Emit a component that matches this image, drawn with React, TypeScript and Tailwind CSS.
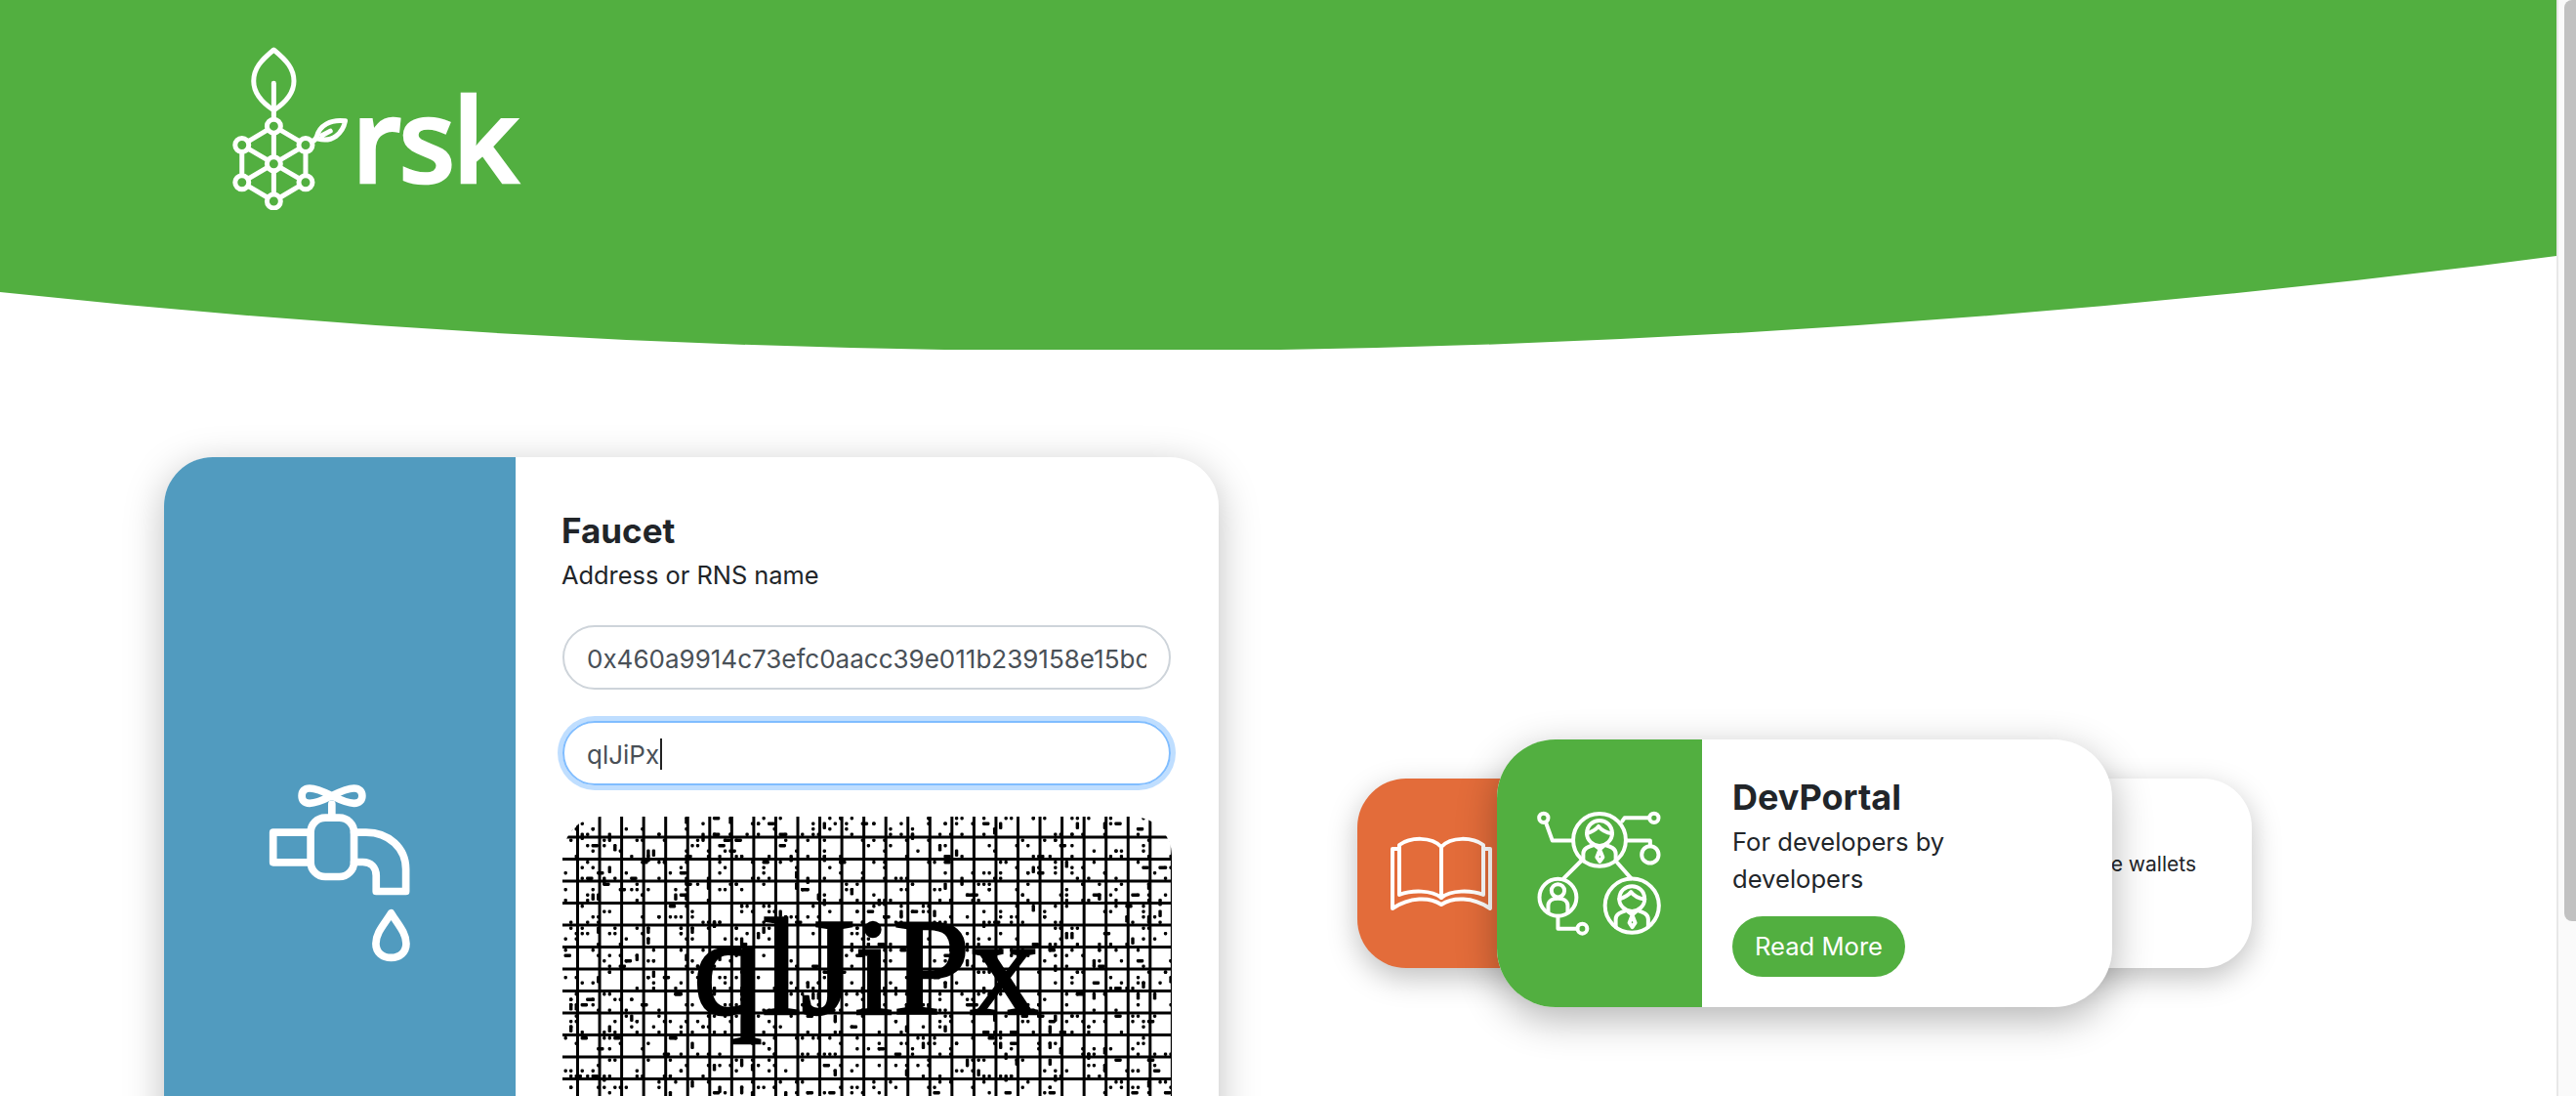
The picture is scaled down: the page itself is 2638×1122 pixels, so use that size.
const GREEN = "#52af40";

function buildNoise() {
  let seed = 12345;
  const rnd = () => {
    seed = (seed * 1103515245 + 12345) & 0x7fffffff;
    return seed / 0x7fffffff;
  };
  const items: { x: number; y: number; w: number; h: number }[] = [];
  for (let c = 0; c < 29; c++) {
    for (let r = 0; r < 16; r++) {
      const n = 1 + Math.floor(rnd() * 6);
      for (let i = 0; i < n; i++) {
        const x = c * 22.55 - 4 + Math.floor(rnd() * 4) * 5.5;
        const y = r * 22.5 + Math.floor(rnd() * 4) * 5.5;
        const t = rnd();
        items.push({ x, y, w: t > 0.92 ? 7.5 : 3.4, h: t < 0.1 ? 7.5 : 3.4 });
      }
    }
  }
  return items;
}
const noise = buildNoise();

function Captcha() {
  const v = Array.from({ length: 28 }, (_, i) => 15.5 + i * 22.55);
  const h = Array.from({ length: 15 }, (_, i) => 21 + i * 22.5);
  return (
    <svg width="624" height="340" viewBox="0 0 624 340" className="block blur-[0.5px]">
      <rect width="624" height="340" fill="#fff" />
      <text x="134" y="202" fontFamily="'Liberation Serif', serif" fontSize="142" fill="#000" stroke="#000" strokeWidth="2.5" textLength="354" lengthAdjust="spacingAndGlyphs">
        qlJiPx
      </text>
      {noise.map((d, i) => (
        <rect key={i} x={d.x} y={d.y} width={d.w} height={d.h} rx="1.3" fill="#000" />
      ))}
      {v.map((x) => (
        <line key={x} x1={x} x2={x} y1="0" y2="340" stroke="#000" strokeWidth="3" />
      ))}
      {h.map((y) => (
        <line key={y} y1={y} y2={y} x1="0" x2="624" stroke="#000" strokeWidth="3" />
      ))}
    </svg>
  );
}

function Logo() {
  const nodes = [
    [240, 327],
    [142, 385],
    [338, 385],
    [240, 443],
    [142, 500],
    [338, 500],
    [240, 558],
  ];
  return (
    <svg width="120" height="168" viewBox="110 80 360 505" fill="none" stroke="#fff" strokeWidth="15" strokeLinecap="round" strokeLinejoin="round">
      <path d="M240 92C200 125 178 150 178 188C178 225 205 255 240 278C275 255 302 225 302 188C302 150 280 125 240 92Z" />
      <path d="M240 195V327" />
      <path d="M240 327L142 385V500L240 558L338 500V385L240 327V558M142 385L338 500M338 385L142 500" />
      <path d="M352 378C360 374 368 372 372 360C380 325 415 305 460 311C452 350 420 378 376 366M388 356L414 342" />
      {nodes.map(([x, y]) => (
        <circle key={x + "-" + y} cx={x} cy={y} r="21" fill={GREEN} />
      ))}
    </svg>
  );
}

function Tap() {
  return (
    <svg width="147" height="182" viewBox="100 70 440 545" fill="none" stroke="#fff" strokeWidth="23" strokeLinejoin="round" strokeLinecap="round">
      <path d="M300 105C270 90 250 82 232 82C215 82 208 92 208 105C208 118 215 128 232 128C250 128 270 120 300 105C330 90 350 82 368 82C385 82 393 92 393 105C393 118 385 128 368 128C350 128 330 120 300 105Z" />
      <path d="M300 130V172" />
      <rect x="235" y="172" width="133" height="181" rx="45" />
      <path d="M235 217H120V309H235" />
      <path d="M368 217H405C475 217 527 265 527 330V398H436V350C436 325 420 308 395 308H368" />
      <path d="M482 465C460 500 435 525 435 558C435 585 455 601 482 601C508 601 528 585 528 558C528 525 503 500 482 465Z" />
    </svg>
  );
}

function Network() {
  return (
    <svg width="130" height="128" viewBox="100 60 390 385" fill="none" stroke="#fff" strokeWidth="12" strokeLinejoin="round" strokeLinecap="round">
      <circle cx="295" cy="150" r="81" />
      <circle cx="395" cy="352" r="83" />
      <circle cx="167" cy="327" r="57" />
      <circle cx="123" cy="82" r="14" />
      <circle cx="463" cy="82" r="14" />
      <circle cx="451" cy="195" r="26" />
      <circle cx="242" cy="423" r="15" />
      <path d="M130 97L150 152H213M365 92L372 82H449M376 152H451V169M238 215L185 268M350 220L392 268M167 384V423H227" />
      <path d="M256 130C256 105 275 90 295 90C315 90 334 105 334 130C334 150 315 168 295 168C275 168 256 150 256 130Z" />
      <path d="M256 130C270 125 282 120 292 108C302 122 318 128 334 130" />
      <path d="M245 215V192C245 175 262 170 278 165M345 215V192C345 175 328 170 312 165M283 168H308L296 178ZM296 180L287 203L296 216L305 203Z" />
      <path d="M356 332C356 307 375 292 395 292C415 292 434 307 434 332C434 352 415 370 395 370C375 370 356 352 356 332Z" />
      <path d="M356 332C370 327 382 322 392 310C402 324 418 330 434 332" />
      <path d="M345 418V394C345 377 362 372 378 367M445 418V394C445 377 428 372 412 367M383 370H408L396 380ZM396 382L387 405L396 418L405 405Z" />
      <circle cx="167" cy="306" r="20" />
      <path d="M137 372V352C137 335 155 330 167 330C179 330 197 335 197 352V372" />
    </svg>
  );
}

function Book() {
  return (
    <svg width="104" height="76" viewBox="0 0 104 76" fill="none" stroke="#fff" strokeWidth="4" strokeLinejoin="round" strokeLinecap="round">
      <path d="M9 9C20 1 42 0 52 11V63C42 55 22 55 9 60Z" />
      <path d="M52 11C62 0 84 1 95 9V60C82 55 62 55 52 63" />
      <path d="M9 13H2V74C20 62 40 62 52 70C64 62 84 62 102 74V13H95" />
    </svg>
  );
}

export default function App() {
  return (
    <div className="flex h-[1122px] w-full overflow-hidden bg-white font-['Inter',sans-serif] text-[#212529]">
      <main className="relative min-w-0 flex-1">
        <header className="relative h-[358px]">
          <svg className="absolute inset-0" width="2618" height="358" viewBox="0 0 2618 358">
            <path d="M0 0H2618V262Q1280 436 0 299Z" fill={GREEN} />
          </svg>
          <div className="relative flex items-start pl-[237px] pt-[47px]">
            <Logo />
            <span className="ml-[3px] mt-[24px] font-['Open_Sans',sans-serif] text-[119px] font-semibold leading-[140px] tracking-[-3px] text-white [-webkit-text-stroke:2.5px_white]">rsk</span>
          </div>
        </header>

        <section className="flex items-start pl-[168px] pt-[110px]">
          <article className="flex h-[852px] w-[1080px] shrink-0 overflow-hidden rounded-[50px] bg-white shadow-[0_10px_40px_rgba(0,0,0,0.25)]">
            <div className="flex w-[360px] shrink-0 items-center justify-center bg-[#519bbf] pr-[3px]">
              <Tap />
            </div>
            <div className="flex flex-col px-[48px] pt-[52px]">
              <h2 className="ml-[-1px] text-[35px] font-bold leading-[46px]">Faucet</h2>
              <p className="ml-[-1px] mt-[1px] text-[25.4px] leading-[44px]">Address or RNS name</p>
              <div className="mt-[29px] flex h-[66px] w-[623px] items-center overflow-hidden whitespace-nowrap rounded-full border-2 border-[#ced4da] px-[23px] pt-[2px] text-[26px] text-[#495057]">
                <span className="block w-full overflow-hidden">0x460a9914c73efc0aacc39e011b239158e15bcd4f</span>
              </div>
              <div className="mt-[32px] flex h-[66px] w-[623px] items-center rounded-full border-2 border-[#80bdff] px-[23px] pt-[2px] text-[26px] text-[#495057] shadow-[0_0_0_5px_rgba(0,123,255,0.25)]">
                <span>qlJiPx</span>
                <span className="ml-px h-[32px] w-[2px] bg-[#222]" />
              </div>
              <div className="mt-[32px] w-[624px] overflow-hidden rounded-[40px]">
                <Captcha />
              </div>
            </div>
          </article>

          <div className="relative ml-[285px] mt-[289px] w-[630px]">
            <div className="absolute left-[-143px] top-[40px] flex h-[194px] w-[300px] items-center rounded-[50px] bg-[#e36c3a] pl-[34px] shadow-[0_10px_30px_rgba(0,0,0,0.25)]">
              <Book />
            </div>
            <div className="absolute right-[-143px] top-[40px] flex h-[194px] w-[300px] items-center justify-end rounded-[50px] bg-white pb-[18px] pr-[57px] text-[21px] shadow-[0_10px_30px_rgba(0,0,0,0.25)]">
              <span>e wallets</span>
            </div>
            <div className="relative flex h-[274px] overflow-hidden rounded-[60px] bg-white shadow-[0_12px_40px_rgba(0,0,0,0.3)]">
              <div className="flex w-[210px] shrink-0 items-center justify-center bg-[#52af40]">
                <Network />
              </div>
              <div className="flex flex-col pl-[31px] pt-[38px]">
                <h3 className="text-[36px] font-bold leading-[42px]">DevPortal</h3>
                <p className="mt-[6px] w-[300px] text-[25.6px] leading-[38px]">For developers by developers</p>
                <button className="mt-[19px] flex h-[62px] w-[177px] items-center justify-center rounded-full bg-[#52af40] text-[25.6px] text-white">Read More</button>
              </div>
            </div>
          </div>
        </section>
      </main>

      <aside className="w-[20px] shrink-0 border-l-2 border-[#e8e8e8] bg-[#fafafa] pl-[6px]">
        <div className="h-[943px] w-[12px] rounded-l-[8px] bg-[#c1c1c1]" />
      </aside>
    </div>
  );
}
